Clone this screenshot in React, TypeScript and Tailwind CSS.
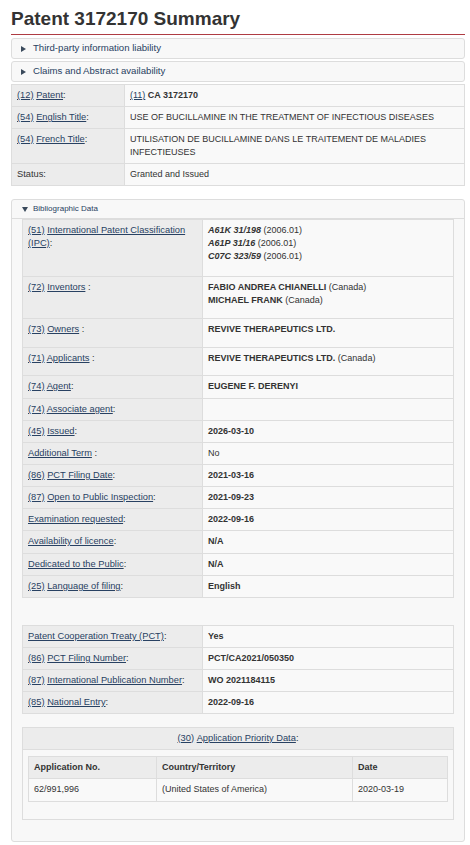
import React from 'react';

type Row = { label: React.ReactNode; value: React.ReactNode; pb?: string };

const Lnk: React.FC<{ children: React.ReactNode }> = ({ children }) => (
  <a href="#" className="text-[#284162] underline decoration-[#284162]">
    {children}
  </a>
);

const Label: React.FC<{ code?: string; text: string; tail?: string }> = ({ code, text, tail = ':' }) => (
  <>
    {code && (
      <>
        <Lnk>{code}</Lnk>{' '}
      </>
    )}
    <Lnk>{text}</Lnk>
    {tail}
  </>
);

const RightTri = () => (
  <svg width="5" height="6" viewBox="0 0 5 6" className="shrink-0">
    <path d="M0 0 L5 3 L0 6 Z" fill="#3a4a5c" />
  </svg>
);

const DownTri = () => (
  <svg width="6" height="5" viewBox="0 0 6 5" className="shrink-0">
    <path d="M0 0 L6 0 L3 5 Z" fill="#3a4a5c" />
  </svg>
);

const Collapsed: React.FC<{ title: string }> = ({ title }) => (
  <div className="h-[21px] border border-[#dddddd] rounded-[3px] bg-[#f8f8f8] flex items-center gap-[7px] pl-[9px] text-[9.6px] text-[#284162]">
    <RightTri />
    <span>{title}</span>
  </div>
);

const DataTable: React.FC<{ rows: Row[]; labelW: string }> = ({ rows, labelW }) => (
  <table className="w-full border-collapse text-[9px] leading-[13px]">
    <tbody>
      {rows.map((r, i) => (
        <tr key={i}>
          <td className={`${labelW} border border-[#dddddd] bg-[#ececec] align-top pl-[5px] pt-[4px] text-[9.3px] ${r.pb ?? 'pb-[4px]'}`}>
            {r.label}
          </td>
          <td className={`border border-[#dddddd] bg-[#f9f9f9] align-top pl-[5px] pr-[5px] pt-[4px] ${r.pb ?? 'pb-[4px]'}`}>
            {r.value}
          </td>
        </tr>
      ))}
    </tbody>
  </table>
);

const summaryRows: Row[] = [
  { label: <Label code="(12)" text="Patent" />, value: <><Lnk>(11)</Lnk> <b>CA 3172170</b></> },
  { label: <Label code="(54)" text="English Title" />, value: 'USE OF BUCILLAMINE IN THE TREATMENT OF INFECTIOUS DISEASES' },
  { label: <Label code="(54)" text="French Title" />, value: 'UTILISATION DE BUCILLAMINE DANS LE TRAITEMENT DE MALADIES INFECTIEUSES' },
  { label: 'Status:', value: 'Granted and Issued' },
];

const biblioRows: Row[] = [
  {
    label: (
      <>
        <Lnk>(51)</Lnk> <Lnk>International Patent Classification (IPC)</Lnk>:
      </>
    ),
    value: (
      <>
        <div><b><i>A61K 31/198</i></b> (2006.01)</div>
        <div><b><i>A61P 31/16</i></b> (2006.01)</div>
        <div><b><i>C07C 323/59</i></b> (2006.01)</div>
      </>
    ),
    pb: 'pb-[13px]',
  },
  {
    label: <Label code="(72)" text="Inventors" tail=" :" />,
    value: (
      <>
        <div><b>FABIO ANDREA CHIANELLI</b> (Canada)</div>
        <div><b>MICHAEL FRANK</b> (Canada)</div>
      </>
    ),
    pb: 'pb-[11px]',
  },
  { label: <Label code="(73)" text="Owners" tail=" :" />, value: <b>REVIVE THERAPEUTICS LTD.</b>, pb: 'pb-[11px]' },
  { label: <Label code="(71)" text="Applicants" tail=" :" />, value: <><b>REVIVE THERAPEUTICS LTD.</b> (Canada)</>, pb: 'pb-[10px]' },
  { label: <Label code="(74)" text="Agent" />, value: <b>EUGENE F. DERENYI</b>, pb: 'pb-[5px]' },
  { label: <Label code="(74)" text="Associate agent" />, value: '' },
  { label: <Label code="(45)" text="Issued" />, value: <b>2026-03-10</b> },
  { label: <Label text="Additional Term" tail=" :" />, value: 'No' },
  { label: <Label code="(86)" text="PCT Filing Date" />, value: <b>2021-03-16</b> },
  { label: <Label code="(87)" text="Open to Public Inspection" />, value: <b>2021-09-23</b> },
  { label: <Label text="Examination requested" />, value: <b>2022-09-16</b> },
  { label: <Label text="Availability of licence" />, value: <b>N/A</b>, pb: 'pb-[5px]' },
  { label: <Label text="Dedicated to the Public" />, value: <b>N/A</b> },
  { label: <Label code="(25)" text="Language of filing" />, value: <b>English</b> },
];

const pctRows: Row[] = [
  { label: <Label text="Patent Cooperation Treaty (PCT)" />, value: <b>Yes</b> },
  { label: <Label code="(86)" text="PCT Filing Number" />, value: <b>PCT/CA2021/050350</b> },
  { label: <Label code="(87)" text="International Publication Number" />, value: <b>WO 2021184115</b> },
  { label: <Label code="(85)" text="National Entry" />, value: <b>2022-09-16</b> },
];

const App: React.FC = () => {
  return (
    <div className="min-h-screen bg-white pl-[11px] pr-[5px] font-['Liberation_Sans',Arial,sans-serif] text-[#333333]">
      <h1 className="pt-[8px] text-[19px] leading-[22px] font-bold text-[#333333]">Patent 3172170 Summary</h1>
      <div className="mt-[4px] h-px bg-[#af3c43]" />

      <div className="mt-[3px] flex flex-col gap-[2px]">
        <Collapsed title="Third-party information liability" />
        <Collapsed title="Claims and Abstract availability" />
      </div>

      <div className="mt-[2px]">
        <DataTable rows={summaryRows} labelW="w-[113px]" />
      </div>

      {/* Bibliographic data section */}
      <div className="mt-[13px] border border-[#dddddd] rounded-[3px] bg-[#f8f8f8] pb-[21px]">
        <div className="h-[19px] flex items-center gap-[5px] pl-[10px] border-b border-[#dddddd] text-[8px] text-[#284162]">
          <DownTri />
          <span>Bibliographic Data</span>
        </div>
        <div className="px-[10px]">
          <DataTable rows={biblioRows} labelW="w-[180px]" />

          <div className="mt-[27px]">
            <DataTable rows={pctRows} labelW="w-[180px]" />
          </div>

          <div className="mt-[13px] border border-[#dddddd] bg-[#f8f8f8] pb-[17px]">
            <div className="h-[22px] flex items-center justify-center bg-[#ececec] border-b border-[#dddddd] text-[9.3px]">
              <Lnk>(30)</Lnk>&nbsp;<Lnk>Application Priority Data</Lnk>:
            </div>
            <div className="px-[5px] pt-[6px]">
              <table className="w-full border-collapse text-[9px] leading-[13px]">
                <thead>
                  <tr className="bg-[#ececec]">
                    <th className="w-[128px] border border-[#dddddd] text-left font-bold pl-[5px] pt-[4px] pb-[4px]">Application No.</th>
                    <th className="w-[196px] border border-[#dddddd] text-left font-bold pl-[5px] pt-[4px] pb-[4px]">Country/Territory</th>
                    <th className="border border-[#dddddd] text-left font-bold pl-[5px] pt-[4px] pb-[4px]">Date</th>
                  </tr>
                </thead>
                <tbody>
                  <tr className="bg-[#f9f9f9]">
                    <td className="border border-[#dddddd] pl-[5px] pt-[4px] pb-[5px]">62/991,996</td>
                    <td className="border border-[#dddddd] pl-[5px] pt-[4px] pb-[5px]">(United States of America)</td>
                    <td className="border border-[#dddddd] pl-[5px] pt-[4px] pb-[5px]">2020-03-19</td>
                  </tr>
                </tbody>
              </table>
            </div>
          </div>
        </div>
      </div>
      <div className="mt-[3px] h-[8px] border border-b-0 border-[#dddddd] rounded-t-[3px] bg-[#f8f8f8]" />
    </div>
  );
};

export default App;
